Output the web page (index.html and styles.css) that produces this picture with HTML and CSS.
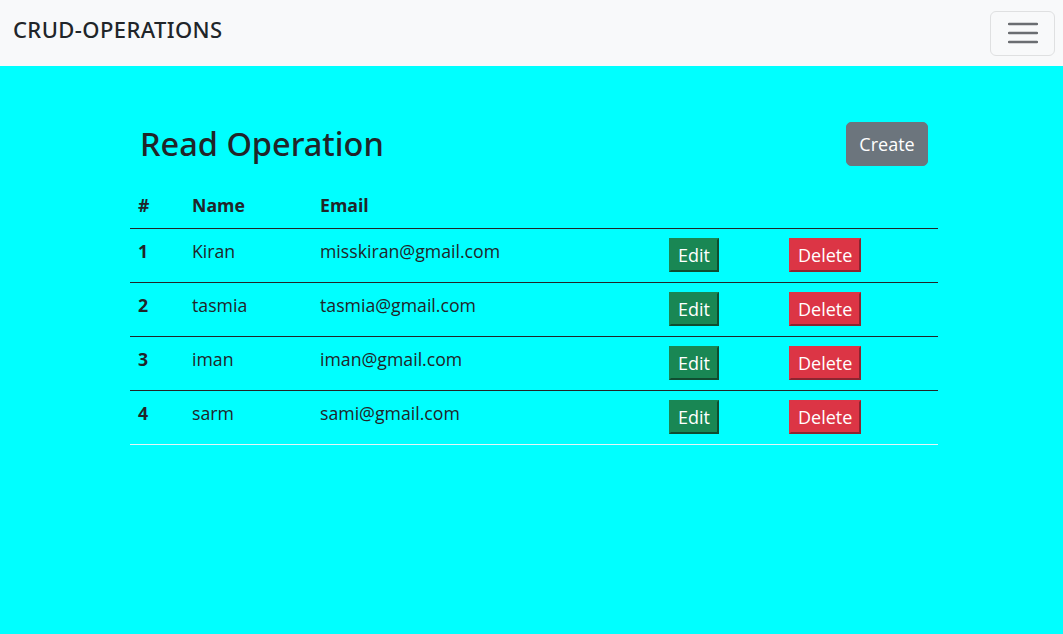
FILE: index.html
```html
<!DOCTYPE html>
<html lang="en">
<head>
<meta charset="utf-8">
<title>CRUD-OPERATIONS</title>
<link rel="stylesheet" href="styles.css">
</head>
<body>
<nav class="navbar">
  <span class="brand">CRUD-OPERATIONS</span>
  <button class="toggler" aria-label="Toggle navigation">
    <svg width="30" height="22" viewBox="0 0 30 22" aria-hidden="true">
      <path d="M1 2h28M1 11h28M1 20h28" stroke="#6a6d71" stroke-width="2.4" stroke-linecap="round" fill="none"/>
    </svg>
  </button>
</nav>
<main class="content">
  <div class="head-row">
    <h2 class="title">Read Operation</h2>
    <button class="btn-create">Create</button>
  </div>
  <table class="data-table">
    <colgroup>
      <col class="c-num"><col class="c-name"><col class="c-email"><col class="c-edit"><col class="c-del">
    </colgroup>
    <thead>
      <tr><th>#</th><th>Name</th><th>Email</th><th></th><th></th></tr>
    </thead>
    <tbody>
      <tr><th>1</th><td>Kiran</td><td>misskiran@gmail.com</td><td><button class="btn btn-edit">Edit</button></td><td><button class="btn btn-del">Delete</button></td></tr>
      <tr><th>2</th><td>tasmia</td><td>tasmia@gmail.com</td><td><button class="btn btn-edit">Edit</button></td><td><button class="btn btn-del">Delete</button></td></tr>
      <tr><th>3</th><td>iman</td><td>iman@gmail.com</td><td><button class="btn btn-edit">Edit</button></td><td><button class="btn btn-del">Delete</button></td></tr>
      <tr class="last"><th>4</th><td>sarm</td><td>sami@gmail.com</td><td><button class="btn btn-edit">Edit</button></td><td><button class="btn btn-del">Delete</button></td></tr>
    </tbody>
  </table>
</main>
</body>
</html>
```
FILE: styles.css
```css
* { box-sizing: border-box; }
html, body { margin: 0; }
body {
  background: #00ffff;
  color: #212529;
  font-family: "Open Sans", "Noto Sans", sans-serif;
  font-size: 17.7px;
  line-height: 27px;
  min-height: 634px;
}
.navbar {
  height: 66px;
  background: #f8f9fa;
  display: flex;
  align-items: center;
  justify-content: space-between;
  padding: 0 8px 0 13px;
}
.brand {
  font-family: "Noto Sans", "Open Sans", sans-serif;
  font-size: 22px;
  font-weight: 500;
  letter-spacing: 0.4px;
  color: #212529;
  line-height: 30px;
  margin-bottom: 8px;
}
.toggler {
  width: 65px;
  height: 45px;
  border: 1px solid #dfe0e1;
  border-radius: 6px;
  background: transparent;
  display: flex;
  align-items: center;
  justify-content: center;
  padding: 0;
}
.content {
  width: 808px;
  margin: 56px 0 0 130px;
}
.head-row {
  display: flex;
  justify-content: space-between;
  align-items: center;
  padding: 0 10px;
  height: 44px;
}
.title {
  margin: 0;
  font-family: "Noto Sans", "Open Sans", sans-serif;
  font-size: 32.5px;
  font-weight: 500;
  line-height: 40px;
}
.btn-create {
  font-family: inherit;
  font-size: 18px;
  line-height: 27px;
  color: #fff;
  background: #6c757d;
  border: 1px solid #6c757d;
  border-radius: 5px;
  width: 82px;
  height: 44px;
  padding: 0;
  text-align: center;
}
.data-table {
  width: 808px;
  margin-top: 18px;
  border-collapse: collapse;
  table-layout: fixed;
}
.c-num { width: 54px; }
.c-name { width: 128px; }
.c-email { width: 349px; }
.c-edit { width: 120px; }
.c-del { width: 157px; }
.data-table th, .data-table td {
  text-align: left;
  vertical-align: top;
  padding: 9px 8px;
}
.data-table th { font-weight: 700; }
.data-table thead th { padding: 8px 8px 9px; }
.data-table thead tr { border-bottom: 1px solid #212529; }
.data-table tbody tr { border-bottom: 1px solid #212529; }
.data-table tbody tr.last { border-bottom: 1px solid #e3f5f7; }
.btn {
  display: inline-block;
  vertical-align: top;
  font-family: inherit;
  font-size: 18px;
  line-height: 28px;
  color: #fff;
  padding: 1px 7px;
  margin-bottom: 1px;
  border-width: 2px;
  border-style: solid;
  border-radius: 0;
}
.btn-edit {
  background: #198754;
  border-color: #198754 #0f4d30 #0f4d30 #198754;
}
.btn-del {
  background: #dc3545;
  border-color: #dc3545 #8c2530 #8c2530 #dc3545;
}
```
